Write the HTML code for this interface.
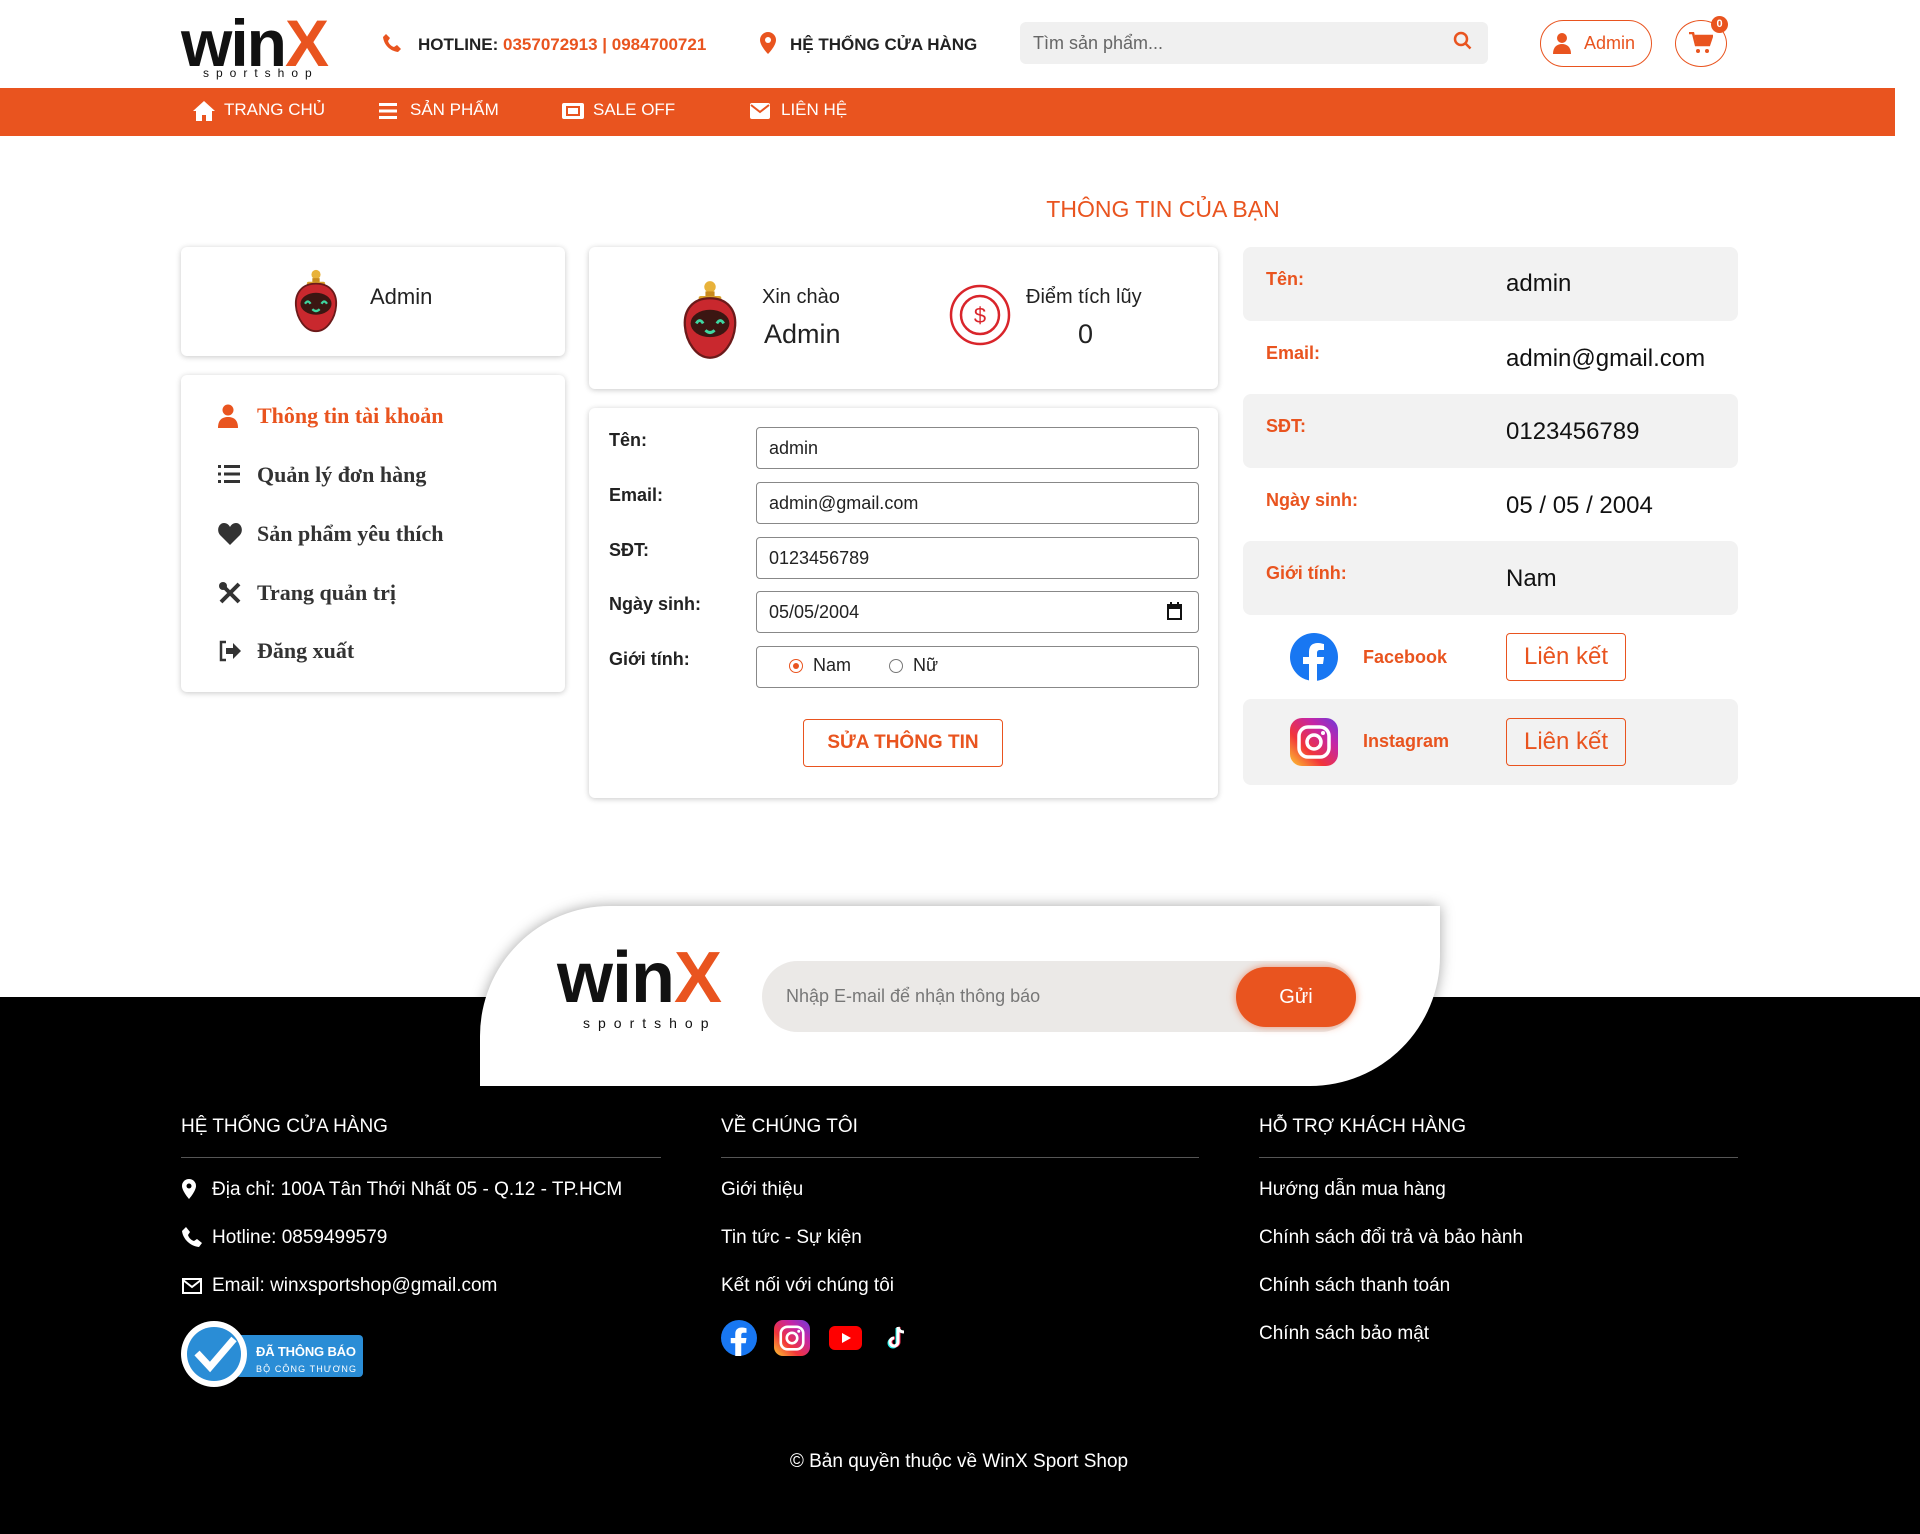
<!DOCTYPE html>
<html><head><meta charset="utf-8">
<style>
*{margin:0;padding:0;box-sizing:border-box}
body{width:1920px;height:1534px;position:relative;background:#fff;font-family:"Liberation Sans",Arial,sans-serif;color:#222;overflow:hidden}
.a{position:absolute}
.or{color:#e9541f}
.card{position:absolute;background:#fff;border-radius:6px;box-shadow:0 1px 6px rgba(0,0,0,.22)}
.nav span{position:absolute;top:100px;color:#fff;font-size:17px}
.mi{position:absolute;left:257px;font-family:"Liberation Serif",serif;font-weight:bold;font-size:22px;color:#333}
.lb{position:absolute;left:609px;font-weight:bold;font-size:18px;color:#222}
.in{position:absolute;left:756px;width:443px;height:42px;border:1px solid #888;border-radius:4px;font-size:18px;padding:10px 12px}
.row{position:absolute;left:1243px;width:495px;border-radius:8px}
.rl{position:absolute;left:23px;font-weight:bold;font-size:18px;color:#e9541f}
.rv{position:absolute;left:263px;font-size:24px;color:#111}
.btn{position:absolute;left:263px;width:120px;height:48px;border:1.5px solid #e9541f;border-radius:4px;color:#e9541f;font-size:24px;text-align:center;line-height:46px}
.fh{position:absolute;top:1116px;color:#fff;font-size:19px}
.fl{position:absolute;top:1157px;height:1px;background:#555}
.fi{position:absolute;color:#fff;font-size:19px}
</style></head><body>

<!-- header -->
<div class="a" style="left:181px;top:6px;font-size:66px;font-weight:900;letter-spacing:-2px;line-height:74px;color:#111">win<span style="color:#e9541f">X</span></div>
<div class="a" style="left:203px;top:66px;font-size:12px;letter-spacing:7px;color:#111">sportshop</div>

<svg class="a" style="left:382px;top:33px" width="20" height="20" viewBox="0 0 20 20"><path d="M4 1l4 4-2 3c1 3 3 5 6 6l3-2 4 4-3 3C8 18 2 12 1 4z" fill="#e9541f"/></svg>
<div class="a" style="left:418px;top:35px;font-size:17px;font-weight:bold">HOTLINE: <span class="or">0357072913 | 0984700721</span></div>
<svg class="a" style="left:760px;top:32px" width="16" height="22" viewBox="0 0 16 22"><path d="M8 0a8 8 0 0 1 8 8c0 6-8 14-8 14S0 14 0 8a8 8 0 0 1 8-8z" fill="#e9541f"/><circle cx="8" cy="8" r="3" fill="#fff"/></svg>
<div class="a" style="left:790px;top:35px;font-size:17px;font-weight:bold">HỆ THỐNG CỬA HÀNG</div>

<div class="a" style="left:1020px;top:22px;width:468px;height:42px;background:#f0f0f0;border-radius:6px"></div>
<div class="a" style="left:1033px;top:33px;font-size:18px;color:#666">Tìm sản phẩm...</div>
<svg class="a" style="left:1453px;top:31px" width="20" height="20" viewBox="0 0 20 20"><circle cx="8" cy="8" r="6" fill="none" stroke="#e9541f" stroke-width="2.5"/><path d="M12.5 12.5l5 5" stroke="#e9541f" stroke-width="2.5"/></svg>

<div class="a" style="left:1540px;top:20px;width:112px;height:47px;border:1.5px solid #e9541f;border-radius:24px"></div>
<svg class="a" style="left:1553px;top:32px" width="18" height="22" viewBox="0 0 18 22"><circle cx="9" cy="6" r="5" fill="#e9541f"/><path d="M0 22c0-7 4-10 9-10s9 3 9 10z" fill="#e9541f"/></svg>
<div class="a or" style="left:1584px;top:33px;font-size:18px">Admin</div>
<div class="a" style="left:1675px;top:20px;width:52px;height:47px;border:1.5px solid #e9541f;border-radius:50%"></div>
<svg class="a" style="left:1689px;top:32px" width="24" height="22" viewBox="0 0 24 22"><path d="M0 1h4l3 12h13l3-9H6" fill="none" stroke="#e9541f" stroke-width="2.5"/><path d="M6 4h17l-3 9H8z" fill="#e9541f"/><circle cx="9" cy="19" r="2" fill="#e9541f"/><circle cx="18" cy="19" r="2" fill="#e9541f"/></svg>
<div class="a" style="left:1711px;top:16px;width:17px;height:17px;border-radius:50%;background:#e9541f;color:#fff;font-size:11px;font-weight:bold;text-align:center;line-height:17px">0</div>

<!-- nav -->
<div class="a nav" style="left:0;top:88px;width:1895px;height:48px;background:#e9541f"></div>
<div class="nav">
<svg class="a" style="left:193px;top:101px" width="22" height="20" viewBox="0 0 22 20"><path d="M11 0L0 10h3v10h6v-6h4v6h6V10h3z" fill="#fff"/></svg>
<span style="left:224px">TRANG CHỦ</span>
<svg class="a" style="left:379px;top:103px" width="18" height="16" viewBox="0 0 18 16"><rect y="0" width="18" height="3" fill="#fff"/><rect y="6.5" width="18" height="3" fill="#fff"/><rect y="13" width="18" height="3" fill="#fff"/></svg>
<span style="left:410px">SẢN PHẨM</span>
<svg class="a" style="left:562px;top:103px" width="22" height="16" viewBox="0 0 22 16"><rect width="22" height="16" rx="2" fill="#fff"/><rect x="4" y="3" width="14" height="10" fill="#e9541f"/><rect x="6" y="5" width="10" height="6" fill="#fff"/></svg>
<span style="left:593px">SALE OFF</span>
<svg class="a" style="left:750px;top:103px" width="20" height="16" viewBox="0 0 20 16"><rect width="20" height="16" rx="2" fill="#fff"/><path d="M1 2l9 7 9-7" fill="none" stroke="#e9541f" stroke-width="2"/></svg>
<span style="left:781px">LIÊN HỆ</span>
</div>

<div class="a or" style="left:960px;width:406px;text-align:center;top:196px;font-size:23px">THÔNG TIN CỦA BẠN</div>

<!-- robot defs -->
<svg width="0" height="0" style="position:absolute"><defs><symbol id="bot" viewBox="0 0 50 70"><circle cx="25" cy="6" r="5" fill="#e8b23a"/><rect x="21" y="10" width="8" height="6" fill="#c98a1e"/><rect x="15" y="14" width="20" height="4" rx="2" fill="#d9a02a"/><path d="M25 16C10 16 2 26 3 40c1 14 10 28 22 28s21-14 22-28C48 26 40 16 25 16z" fill="#c9282e" stroke="#6b1a1a" stroke-width="2"/><ellipse cx="25" cy="38" rx="17" ry="12" fill="#3b1612"/><path d="M13 38q3-5 6 0M31 38q3-5 6 0M21 44q4 4 8 0" fill="none" stroke="#3fd6a0" stroke-width="2.5"/></symbol></defs></svg>

<!-- left cards -->
<div class="card" style="left:181px;top:247px;width:384px;height:109px"></div>
<svg class="a" style="left:290px;top:269px" width="52" height="64"><use href="#bot"/></svg>
<div class="a" style="left:370px;top:284px;font-size:22px">Admin</div>

<div class="card" style="left:181px;top:375px;width:384px;height:317px"></div>
<svg class="a" style="left:218px;top:404px" width="20" height="24" viewBox="0 0 20 24"><circle cx="10" cy="6" r="5.5" fill="#e9541f"/><path d="M0 24c0-8 4-11 10-11s10 3 10 11z" fill="#e9541f"/></svg>
<div class="mi" style="top:403px;color:#e9541f">Thông tin tài khoản</div>
<svg class="a" style="left:218px;top:465px" width="22" height="18" viewBox="0 0 22 18"><g fill="#333"><rect width="3" height="3"/><rect y="7.5" width="3" height="3"/><rect y="15" width="3" height="3"/><rect x="6" width="16" height="3"/><rect x="6" y="7.5" width="16" height="3"/><rect x="6" y="15" width="16" height="3"/></g></svg>
<div class="mi" style="top:462px">Quản lý đơn hàng</div>
<svg class="a" style="left:218px;top:523px" width="24" height="22" viewBox="0 0 24 22"><path d="M12 22L2 12C-2 7 1 0 6 0c3 0 5 2 6 4 1-2 3-4 6-4 5 0 8 7 4 12z" fill="#333"/></svg>
<div class="mi" style="top:521px">Sản phẩm yêu thích</div>
<svg class="a" style="left:218px;top:581px" width="24" height="24" viewBox="0 0 24 24"><path d="M3 3l18 18M21 3L3 21" stroke="#333" stroke-width="4"/><circle cx="5" cy="5" r="4" fill="#333"/></svg>
<div class="mi" style="top:580px">Trang quản trị</div>
<svg class="a" style="left:218px;top:640px" width="24" height="22" viewBox="0 0 24 22"><path d="M8 2H3v18h5" fill="none" stroke="#333" stroke-width="2.5"/><path d="M8 8h7V3l8 8-8 8v-5H8z" fill="#333"/></svg>
<div class="mi" style="top:638px">Đăng xuất</div>

<!-- middle cards -->
<div class="card" style="left:589px;top:247px;width:629px;height:142px"></div>
<svg class="a" style="left:680px;top:280px" width="60" height="80"><use href="#bot"/></svg>
<div class="a" style="left:762px;top:286px;font-size:20px">Xin chào</div>
<div class="a" style="left:764px;top:319px;font-size:27px">Admin</div>
<svg class="a" style="left:948px;top:283px" width="64" height="64" viewBox="0 0 64 64"><circle cx="32" cy="32" r="29" fill="none" stroke="#d9252b" stroke-width="2.5"/><circle cx="32" cy="32" r="19" fill="none" stroke="#d9252b" stroke-width="2.5"/><text x="32" y="40" text-anchor="middle" font-family="Liberation Sans" font-size="22" fill="#d9252b">$</text></svg>
<div class="a" style="left:1026px;top:286px;font-size:20px">Điểm tích lũy</div>
<div class="a" style="left:1078px;top:319px;font-size:27px">0</div>

<div class="card" style="left:589px;top:408px;width:629px;height:390px"></div>
<div class="lb" style="top:430px">Tên:</div>
<div class="lb" style="top:485px">Email:</div>
<div class="lb" style="top:540px">SĐT:</div>
<div class="lb" style="top:594px">Ngày sinh:</div>
<div class="lb" style="top:649px">Giới tính:</div>
<div class="in" style="top:427px">admin</div>
<div class="in" style="top:482px">admin@gmail.com</div>
<div class="in" style="top:537px">0123456789</div>
<div class="in" style="top:591px">05/05/2004</div>
<svg class="a" style="left:1167px;top:602px" width="15" height="18" viewBox="0 0 15 18"><rect x="1" y="3" width="13" height="14" fill="none" stroke="#111" stroke-width="2"/><rect x="1" y="3" width="13" height="4" fill="#111"/><rect x="3" y="0" width="2" height="4" fill="#111"/><rect x="10" y="0" width="2" height="4" fill="#111"/></svg>
<div class="in" style="top:646px"></div>
<div class="a" style="left:789px;top:659px;width:14px;height:14px;border-radius:50%;border:1.5px solid #e9541f"><div style="margin:2.5px;width:6px;height:6px;border-radius:50%;background:#e9541f"></div></div>
<div class="a" style="left:813px;top:655px;font-size:18px">Nam</div>
<div class="a" style="left:889px;top:659px;width:14px;height:14px;border-radius:50%;border:1.5px solid #777"></div>
<div class="a" style="left:913px;top:655px;font-size:18px">Nữ</div>
<div class="a" style="left:803px;top:719px;width:200px;height:48px;border:1.5px solid #e9541f;border-radius:4px;color:#e9541f;font-weight:bold;font-size:19px;text-align:center;line-height:45px">SỬA THÔNG TIN</div>

<!-- right -->
<div class="row" style="top:247px;height:74px;background:#f2f2f2"><div class="rl" style="top:22px">Tên:</div><div class="rv" style="top:23px">admin</div></div>
<div class="row" style="top:321px;height:73px"><div class="rl" style="top:22px">Email:</div><div class="rv" style="top:24px">admin@gmail.com</div></div>
<div class="row" style="top:394px;height:74px;background:#f2f2f2"><div class="rl" style="top:22px">SĐT:</div><div class="rv" style="top:24px">0123456789</div></div>
<div class="row" style="top:468px;height:73px"><div class="rl" style="top:22px">Ngày sinh:</div><div class="rv" style="top:24px">05 / 05 / 2004</div></div>
<div class="row" style="top:541px;height:74px;background:#f2f2f2"><div class="rl" style="top:22px">Giới tính:</div><div class="rv" style="top:24px">Nam</div></div>
<div class="row" style="top:615px;height:84px">
<svg class="a" style="left:47px;top:18px" width="48" height="48" viewBox="0 0 48 48"><circle cx="24" cy="24" r="24" fill="#1877f2"/><path d="M27 48V31h6l1-7h-7v-4c0-2 1-3 3-3h4v-6c-1 0-3-1-6-1-6 0-9 3-9 9v5h-6v7h6v17z" fill="#fff"/></svg>
<div class="rl" style="left:120px;top:32px">Facebook</div>
<div class="btn" style="top:18px">Liên kết</div></div>
<div class="row" style="top:699px;height:86px;background:#f2f2f2">
<svg class="a" style="left:47px;top:19px" width="48" height="48" viewBox="0 0 48 48"><defs><linearGradient id="ig" x1="0" y1="1" x2="1" y2="0"><stop offset="0" stop-color="#fdc830"/><stop offset=".35" stop-color="#f2353a"/><stop offset=".7" stop-color="#c425a8"/><stop offset="1" stop-color="#6a3ddb"/></linearGradient></defs><rect width="48" height="48" rx="12" fill="url(#ig)"/><rect x="9" y="9" width="30" height="30" rx="9" fill="none" stroke="#fff" stroke-width="3.5"/><circle cx="24" cy="24" r="7" fill="none" stroke="#fff" stroke-width="3.5"/><circle cx="33" cy="15" r="2" fill="#fff"/></svg>
<div class="rl" style="left:120px;top:32px">Instagram</div>
<div class="btn" style="top:19px">Liên kết</div></div>

<!-- footer -->
<div class="a" style="left:0;top:997px;width:1920px;height:537px;background:#000"></div>
<div class="a" style="left:480px;top:906px;width:960px;height:180px;background:#fff;border-radius:130px 0 130px 0;box-shadow:0 0 14px rgba(0,0,0,.35)"></div>
<div class="a" style="left:557px;top:938px;font-size:72px;font-weight:900;letter-spacing:-1px;line-height:80px;color:#111">win<span style="color:#e9541f">X</span></div>
<div class="a" style="left:583px;top:1015px;font-size:14px;letter-spacing:8px;color:#111">sportshop</div>
<div class="a" style="left:762px;top:961px;width:594px;height:71px;background:#ebe9e7;border-radius:36px"></div>
<div class="a" style="left:786px;top:986px;font-size:18px;color:#777">Nhập E-mail để nhận thông báo</div>
<div class="a" style="left:1236px;top:967px;width:120px;height:60px;background:#e9541f;border-radius:30px;color:#fff;font-size:20px;text-align:center;line-height:60px;box-shadow:0 0 8px rgba(233,84,31,.6)">Gửi</div>

<div class="fh" style="left:181px">HỆ THỐNG CỬA HÀNG</div>
<div class="fh" style="left:721px">VỀ CHÚNG TÔI</div>
<div class="fh" style="left:1259px">HỖ TRỢ KHÁCH HÀNG</div>
<div class="fl" style="left:181px;width:480px"></div>
<div class="fl" style="left:721px;width:478px"></div>
<div class="fl" style="left:1259px;width:479px"></div>

<svg class="a" style="left:182px;top:1179px" width="14" height="20" viewBox="0 0 14 20"><path d="M7 0a7 7 0 0 1 7 7c0 5-7 13-7 13S0 12 0 7a7 7 0 0 1 7-7z" fill="#fff"/><circle cx="7" cy="7" r="2.5" fill="#000"/></svg>
<div class="fi" style="left:212px;top:1179px">Địa chỉ: 100A Tân Thới Nhất 05 - Q.12 - TP.HCM</div>
<svg class="a" style="left:182px;top:1227px" width="20" height="20" viewBox="0 0 20 20"><path d="M4 0l4 5-2 3c1 3 3 5 6 6l3-2 5 4-3 4C8 19 1 12 0 4z" fill="#fff"/></svg>
<div class="fi" style="left:212px;top:1227px">Hotline: 0859499579</div>
<svg class="a" style="left:182px;top:1278px" width="20" height="16" viewBox="0 0 20 16"><rect x="1" y="1" width="18" height="14" fill="none" stroke="#fff" stroke-width="2"/><path d="M1 2l9 7 9-7" fill="none" stroke="#fff" stroke-width="2"/></svg>
<div class="fi" style="left:212px;top:1275px">Email: winxsportshop@gmail.com</div>
<svg class="a" style="left:181px;top:1321px" width="182" height="67" viewBox="0 0 182 67"><rect x="55" y="14" width="127" height="42" rx="4" fill="#2a8dd6"/><circle cx="33" cy="33" r="33" fill="#fff"/><circle cx="33" cy="33" r="27" fill="#2a8dd6"/><path d="M16 32l13 14 24-28" fill="none" stroke="#fff" stroke-width="7"/><text x="75" y="35" font-family="Liberation Sans" font-weight="bold" font-size="13" fill="#fff" textLength="100">ĐÃ THÔNG BÁO</text><text x="75" y="51" font-family="Liberation Sans" font-size="9" fill="#fff" textLength="100">BỘ CÔNG THƯƠNG</text></svg>

<div class="fi" style="left:721px;top:1179px">Giới thiệu</div>
<div class="fi" style="left:721px;top:1227px">Tin tức - Sự kiện</div>
<div class="fi" style="left:721px;top:1275px">Kết nối với chúng tôi</div>
<svg class="a" style="left:721px;top:1320px" width="36" height="36" viewBox="0 0 48 48"><circle cx="24" cy="24" r="24" fill="#1877f2"/><path d="M27 48V31h6l1-7h-7v-4c0-2 1-3 3-3h4v-6c-1 0-3-1-6-1-6 0-9 3-9 9v5h-6v7h6v17z" fill="#fff"/></svg>
<svg class="a" style="left:774px;top:1320px" width="36" height="36" viewBox="0 0 48 48"><rect width="48" height="48" rx="12" fill="url(#ig)"/><rect x="9" y="9" width="30" height="30" rx="9" fill="none" stroke="#fff" stroke-width="3.5"/><circle cx="24" cy="24" r="7" fill="none" stroke="#fff" stroke-width="3.5"/><circle cx="33" cy="15" r="2" fill="#fff"/></svg>
<svg class="a" style="left:829px;top:1326px" width="33" height="24" viewBox="0 0 33 24"><rect width="33" height="24" rx="6" fill="#f00"/><path d="M13 7v10l9-5z" fill="#fff"/></svg>
<svg class="a" style="left:886px;top:1326px" width="22" height="24" viewBox="0 0 22 24"><path d="M12 1v15a4 4 0 1 1-4-4" fill="none" stroke="#25f4ee" stroke-width="3" transform="translate(-1 1)"/><path d="M12 1v15a4 4 0 1 1-4-4" fill="none" stroke="#fe2c55" stroke-width="3" transform="translate(1 0)"/><path d="M12 1v15a4 4 0 1 1-4-4M12 1c1 4 3 5 6 5" fill="none" stroke="#fff" stroke-width="3"/></svg>

<div class="fi" style="left:1259px;top:1179px">Hướng dẫn mua hàng</div>
<div class="fi" style="left:1259px;top:1227px">Chính sách đổi trả và bảo hành</div>
<div class="fi" style="left:1259px;top:1275px">Chính sách thanh toán</div>
<div class="fi" style="left:1259px;top:1323px">Chính sách bảo mật</div>

<div class="fi" style="left:0;width:1920px;text-align:center;top:1451px;padding-right:2px">© Bản quyền thuộc về WinX Sport Shop</div>
</body></html>
